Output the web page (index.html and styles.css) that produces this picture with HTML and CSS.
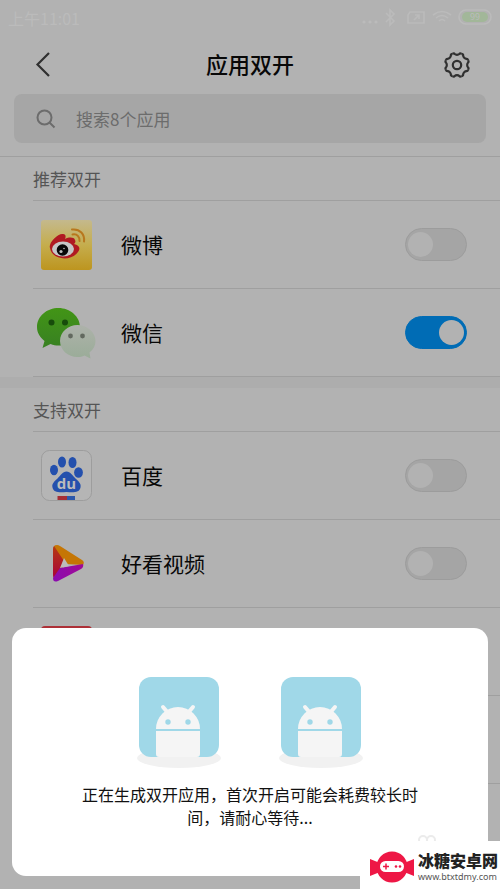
FILE: index.html
```html
<!DOCTYPE html>
<html lang="zh-CN">
<head>
<meta charset="utf-8">
<meta name="viewport" content="width=device-width, initial-scale=1">
<title>应用双开</title>
<link rel="stylesheet" href="styles.css">
</head>
<body>
<div class="status">
  <span>上午11:01</span>
  <span class="status-icons">
    <svg width="130" height="20" viewBox="0 0 130 20" fill="none" stroke="#bbb" stroke-width="1.6">
      <g fill="#bbb" stroke="none"><circle cx="2" cy="14" r="1.600"/><circle cx="8" cy="14" r="1.600"/><circle cx="14" cy="14" r="1.600"/></g>
      <path d="M24 5l8 8-4 4V2l4 4-8 8"/>
      <path d="M48 4h14v11H46V7zM52 12l5-5M53 7h4v4"/>
      <path d="M71 7q9-7 18 0M74 10q6-5 12 0M77 13q3-3 6 0"/>
      <rect x="97" y="2" width="32" height="14" rx="7"/>
      <rect x="100" y="4" width="26" height="10" rx="5" fill="#a2b799" stroke="none"/>
      <text x="113" y="12" text-anchor="middle" class="charge">99</text>
    </svg>
  </span>
</div>
<header class="bar">
  <button class="icon-button" aria-label="返回">
    <svg width="28" height="28" viewBox="0 0 28 28" fill="none" stroke="#303030" stroke-width="2.2"><path d="M20 2L8.500 13.500 20 25"/></svg>
  </button>
  <h1>应用双开</h1>
  <button class="icon-button" aria-label="设置">
    <svg width="28" height="28" viewBox="-14 -14 28 28" fill="none" stroke="#303030" stroke-width="2.2">
      <defs><path id="tooth" d="M-4.600-11.100Q-3-12-2.300-11-1.500-10.200 0-10.200 1.500-10.200 2.300-11 3-12 4.600-11.100"/></defs>
      <use href="#tooth"/><use href="#tooth" transform="rotate(45)"/><use href="#tooth" transform="rotate(90)"/><use href="#tooth" transform="rotate(135)"/><use href="#tooth" transform="rotate(180)"/><use href="#tooth" transform="rotate(225)"/><use href="#tooth" transform="rotate(270)"/><use href="#tooth" transform="rotate(315)"/>
      <circle r="4.200"/>
    </svg>
  </button>
</header>
<label class="search">
  <svg width="20" height="20" viewBox="0 0 20 20" fill="none" stroke="#6c6c6c" stroke-width="2"><circle cx="8.500" cy="8.500" r="7"/><path d="M13.500 13.500l5 5"/></svg>
  <input type="search" aria-label="搜索应用" placeholder="搜索8个应用">
</label>
<main>
  <section>
    <h2>推荐双开</h2>
    <ul>
      <li>
        <label for="weibo">
          <svg class="app" width="60" height="60" viewBox="0 0 60 60">
            <defs><linearGradient id="gold" x2="0" y2="1"><stop stop-color="#c4b98d"/><stop offset=".5" stop-color="#c5ad4d"/><stop offset="1" stop-color="#bd951f"/></linearGradient></defs>
            <rect x="5" y="5" width="51" height="50" rx="3" fill="url(#gold)"/>
            <path d="M14 33c-2-5 8-15 13-14 3 0 3 3 2 5 4-2 9-2 10 1 1 2 0 3-1 4 5 1 7 4 4 8-7 10-26 8-28-4z" fill="#b01a22"/>
            <ellipse cx="27" cy="34" rx="11" ry="7.500" fill="#c6c6c6"/>
            <circle cx="26.500" cy="35" r="5.800" fill="#080808"/><circle cx="25" cy="36.500" r="1.600" fill="#bbb"/><circle cx="28" cy="33.500" r=".8" fill="#bbb"/>
            <path d="M36 14.500c8-1 13 5 12 12M36.500 19.500c5-1 7.500 3 7 6.500" fill="none" stroke="#b8771d" stroke-width="2" stroke-linecap="round"/>
          </svg>
          <span>微博</span>
        </label>
        <input id="weibo" type="checkbox" role="switch">
      </li>
      <li>
        <label for="wechat">
          <svg class="app" width="60" height="60" viewBox="0 0 60 60">
            <defs><linearGradient id="leaf" x2="0" y2="1"><stop stop-color="#429516"/><stop offset="1" stop-color="#388022"/></linearGradient><linearGradient id="mist" x2="0" y2="1"><stop stop-color="#adb2aa"/><stop offset="1" stop-color="#9aac98"/></linearGradient></defs>
            <path d="M22.500 5C11 5 1 13 1 24c0 6 3 10 7.500 14L6.500 45l8-4c3 1 5 1.500 8 1.500C34 42.500 44 34.500 44 24S34 5 22.500 5z" fill="url(#leaf)"/>
            <circle cx="15.500" cy="19.500" r="3" fill="#174c0b"/><circle cx="29" cy="19.500" r="3" fill="#174c0b"/>
            <path d="M41.500 22C32 22 24 29 24 38s8 16 17.500 16c2.500 0 5-.5 7-1.500l6 3-1-6c4-3 6-7 6-11.500C59.500 29 51 22 41.500 22z" fill="url(#mist)"/>
            <circle cx="34.500" cy="33" r="2.400" fill="#62695f"/><circle cx="46.500" cy="33" r="2.400" fill="#62695f"/>
          </svg>
          <span>微信</span>
        </label>
        <input id="wechat" type="checkbox" role="switch" checked>
      </li>
    </ul>
  </section>
  <section>
    <h2>支持双开</h2>
    <ul>
      <li>
        <label for="baidu">
          <svg class="app" width="60" height="60" viewBox="0 0 60 60">
            <rect x="5.500" y="4.500" width="50" height="50" rx="8" fill="#b5b5b5" stroke="#9d9d9d"/>
            <g fill="#2450ad"><ellipse cx="18" cy="24" rx="4" ry="5.300"/><ellipse cx="26" cy="16" rx="4" ry="5.500"/><ellipse cx="36.500" cy="16.500" rx="4" ry="5.500"/><ellipse cx="42.500" cy="26.500" rx="4.400" ry="5.300"/><path d="M30.500 25.500c4 0 6 4 9 7s6 5 5 9c-1 5-6 5-14 4.500-8 .5-13 .5-14-4.500-1-4 2-6 5-9s5-7 9-7z"/></g>
            <text x="30.500" y="43" text-anchor="middle" class="du">du</text>
            <path d="M21.500 50H31v4h-9.500z" fill="#a52d34"/><path d="M31 50h8v4h-8z" fill="#2c57aa"/>
          </svg>
          <span>百度</span>
        </label>
        <input id="baidu" type="checkbox" role="switch">
      </li>
      <li>
        <label for="haokan">
          <svg class="app" width="60" height="60" viewBox="0 0 60 60">
            <defs><linearGradient id="ember" x2="0" y2="1"><stop stop-color="#b53912"/><stop offset="1" stop-color="#a8003b"/></linearGradient><linearGradient id="plum"><stop stop-color="#8a0cb0"/><stop offset="1" stop-color="#a00a95"/></linearGradient></defs>
            <path d="M17 15q0-4 4-3l8 15-7 19q-5 0-5-5z" fill="url(#ember)"/>
            <path d="M18 12q3-2 6 0l22 14q3 2 1 5l-17-1z" fill="#c57605"/>
            <path d="M17 44l7-10 23-4q1 3-2 5L22 47q-5 2-5-3z" fill="url(#plum)"/>
            <path d="M28 24l5 8-9 2z" fill="#bcbcbc"/>
          </svg>
          <span>好看视频</span>
        </label>
        <input id="haokan" type="checkbox" role="switch">
      </li>
      <li><svg class="app" width="60" height="60" viewBox="0 0 60 60"><rect x="5" y="4" width="51" height="51" rx="4" fill="#ad3037"/></svg></li>
      <li></li>
      <li></li>
    </ul>
  </section>
</main>
<div class="dialog" role="dialog" aria-labelledby="progress">
  <div class="robots">
    <svg width="84" height="94" viewBox="0 0 84 94">
      <g id="robot">
        <ellipse cx="42" cy="82" rx="42" ry="10" fill="#f1f1f1"/>
        <rect x="2" y="1" width="80" height="80" rx="12" fill="#a0d8e8"/>
        <path d="M19 53a22 22 0 0 1 44 0zM19 55h44v23q0 3-3 3H22q-3 0-3-3z" fill="#f5f5f5"/>
        <path d="M26 31l6 7M56 31l-6 7" stroke="#f5f5f5" stroke-width="4" stroke-linecap="round"/>
        <circle cx="31" cy="46" r="2.700" fill="#a0d8e8"/><circle cx="51" cy="46" r="2.700" fill="#a0d8e8"/>
      </g>
    </svg>
    <svg width="84" height="94" viewBox="0 0 84 94"><use href="#robot"/></svg>
  </div>
  <p id="progress">正在生成双开应用，首次开启可能会耗费较长时<br>间，请耐心等待...</p>
  <svg class="trace" width="20" height="10" viewBox="0 0 20 10" fill="none" stroke="#ebebeb" stroke-width="2"><circle cx="5" cy="6" r="4"/><circle cx="13" cy="6" r="4"/></svg>
</div>
<aside class="brand">
  <svg width="46" height="32" viewBox="0 0 46 32">
    <path d="M1 8l10 4v9L1 25zM45 8l-10 4v9l10 4z" fill="#ee1745"/>
    <circle cx="23" cy="16" r="15.500" fill="#ee1745"/>
    <rect x="11" y="10" width="24" height="11" rx="5.500" fill="#fff"/>
    <path d="M17 12.500v6M14 15.500h6" stroke="#ee1745" stroke-width="1.500"/><circle cx="27" cy="15.500" r="1.300" fill="#ee1745"/><circle cx="31" cy="15.500" r="1.300" fill="#ee1745"/>
  </svg>
  <div><strong>冰糖安卓网</strong><small>www.btxtdmy.com</small></div>
</aside>
</body>
</html>
```
FILE: styles.css
```css
* { box-sizing: border-box; }

body {
  margin: 0;
  height: 100vh;
  overflow: hidden;
  background: #b2b2b2;
  color: #080808;
  font-family: "Noto Sans CJK SC", sans-serif;
}

svg { display: block; flex: none; }

.status {
  display: flex;
  justify-content: space-between;
  align-items: center;
  height: 36px;
  padding: 0 8px;
  color: #bbb;
  font-size: 16px;
}

.charge { fill: #bbb; stroke: none; font-size: 9px; }

.bar {
  display: flex;
  justify-content: space-between;
  align-items: center;
  height: 58px;
  padding: 0 29px;
}

.icon-button {
  padding: 0;
  border: 0;
  background: none;
}

h1 {
  margin: 0;
  padding-bottom: 4px;
  font-size: 22px;
  font-weight: 500;
}

.search {
  display: flex;
  align-items: center;
  gap: 20px;
  height: 49px;
  margin: 0 14px 13px;
  padding: 0 22px;
  border-radius: 8px;
  background: #a6a6a6;
}

.search input {
  flex: 1;
  min-width: 0;
  padding: 0;
  border: 0;
  outline: 0;
  background: none;
  font: inherit;
  font-size: 17px;
}

.search input::placeholder { color: #6c6c6c; }

section {
  padding-left: 33px;
  border-top: 1px solid #9f9f9f;
}

section + section {
  border-top: 11px solid #adadad;
}

h2 {
  margin: 0;
  color: #555;
  font-size: 17px;
  font-weight: 400;
  line-height: 43px;
}

ul {
  margin: 0;
  padding: 0;
  list-style: none;
}

li {
  display: flex;
  align-items: center;
  justify-content: space-between;
  height: 88px;
  padding: 0 33px 0 3px;
  border-top: 1px solid #9f9f9f;
}

section:first-child li:last-child {
  height: 89px;
  border-bottom: 1px solid #9f9f9f;
}

li label {
  display: flex;
  flex: 1;
  align-items: center;
  gap: 25px;
  font-size: 21px;
}

li span { padding-bottom: 1px; }

li input {
  appearance: none;
  display: flex;
  align-items: center;
  width: 62px;
  height: 33px;
  margin: 0;
  padding: 0 2px;
  border: 1px solid #9c9c9c;
  border-radius: 17px;
  background: #a5a5a5;
}

li input::before {
  content: "";
  width: 25px;
  height: 25px;
  border-radius: 50%;
  background: #b2b2b2;
}

li input:checked {
  justify-content: flex-end;
  border-color: #006cb5;
  background: #006cb5;
}

.du {
  fill: #bcbcbc;
  font: bold 15px "Open Sans", sans-serif;
}

.dialog {
  position: fixed;
  right: 12px;
  bottom: 13px;
  left: 12px;
  padding: 48px 0 32px;
  border-radius: 14px;
  background: #fff;
}

.robots {
  display: flex;
  justify-content: center;
  gap: 58px;
}

.dialog p {
  margin: 13px 0 0;
  color: #111;
  font-size: 16px;
  line-height: 23px;
  text-align: center;
}

.trace {
  margin: 5px 50px 0 auto;
}

.brand {
  position: fixed;
  right: 0;
  bottom: 0;
  display: flex;
  align-items: center;
  gap: 3px;
  width: 140px;
  height: 48px;
  padding: 4px 0 0 9px;
  background: #fff;
}

.brand strong,
.brand small {
  display: block;
  color: #222;
  font-size: 16px;
  font-weight: 900;
  line-height: 20px;
}

.brand small {
  color: #555;
  font-family: "Noto Sans", sans-serif;
  font-size: 9px;
  font-weight: 400;
  line-height: 14px;
}
```
